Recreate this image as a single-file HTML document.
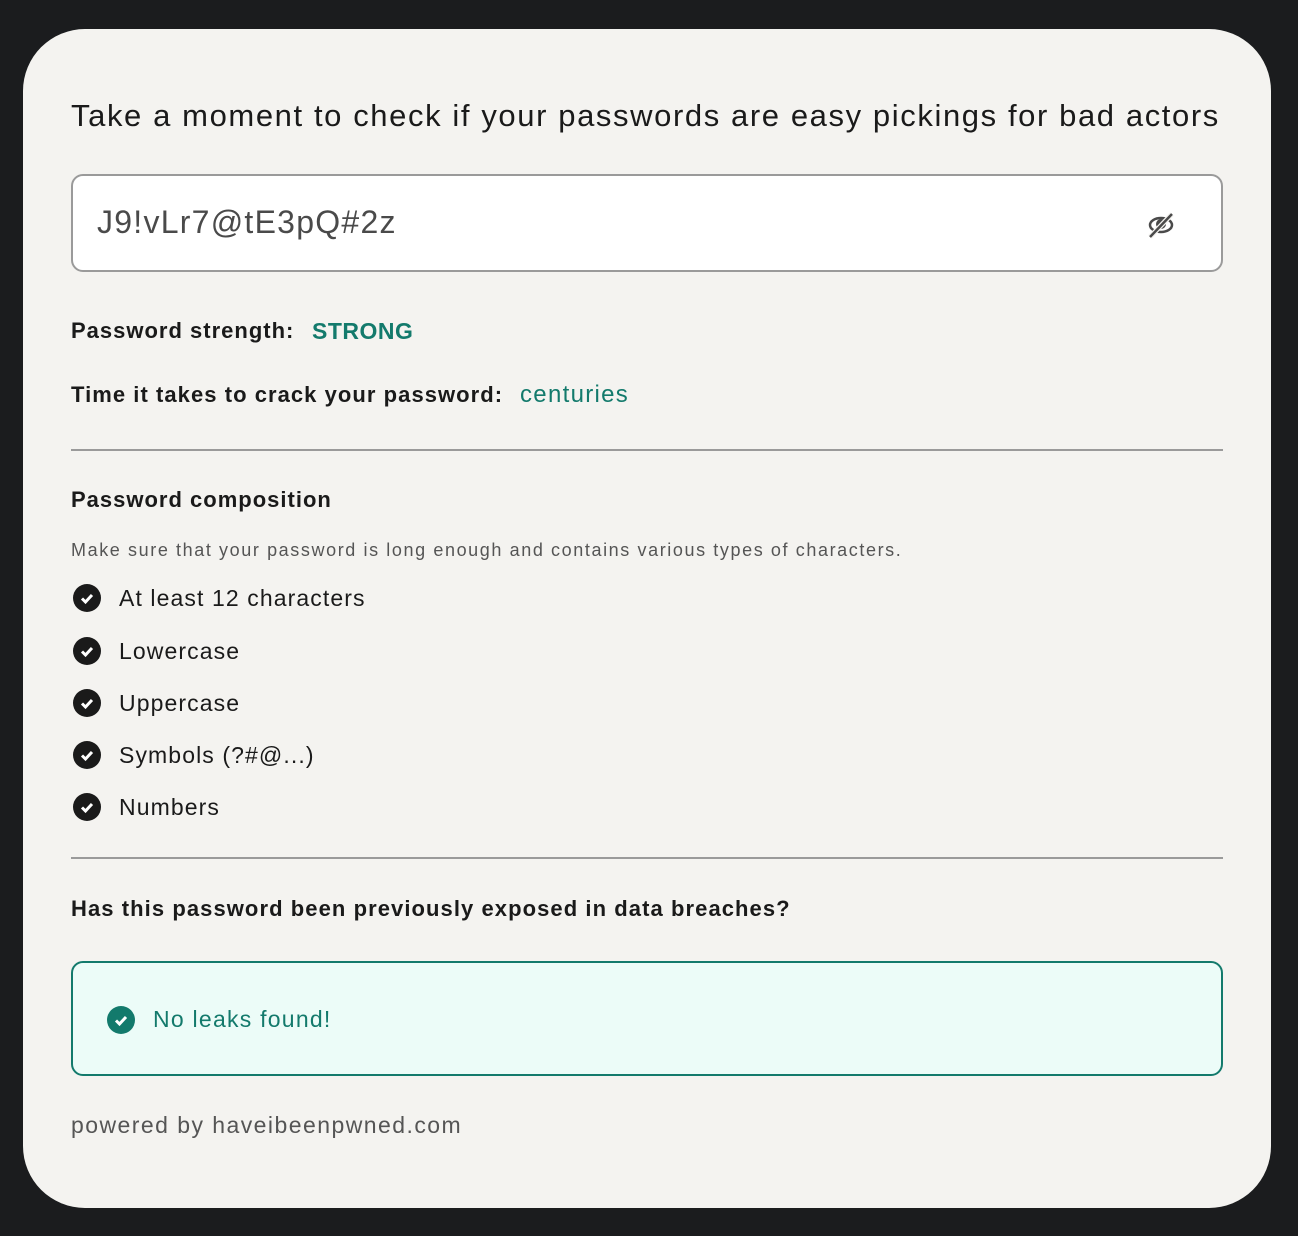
<!DOCTYPE html>
<html><head><style>
body{margin:0;width:1298px;height:1236px;background:#1b1c1e;font-family:"Liberation Sans",sans-serif;position:relative;overflow:hidden}
.card{position:absolute;left:23px;top:29px;width:1248px;height:1179px;background:#f4f3f0;border-radius:62px}
.a{position:absolute;white-space:nowrap;line-height:1}
.b{font-weight:bold;color:#1a1a1a;font-size:22px;letter-spacing:1px}
.g{color:#137a6c}
.hr{position:absolute;left:71px;width:1152px;height:2px;background:#9a9a9a}
.ic{position:absolute;left:73px;width:28px;height:28px;border-radius:50%;background:#1a1a1a}
.ic svg{position:absolute;left:0;top:0}
.it{position:absolute;left:119px;font-size:23px;color:#1a1a1a;line-height:1;letter-spacing:1.1px}
</style></head><body>
<div class="card"></div>
<div class="a" style="left:71px;top:100px;font-size:31px;color:#1a1a1a;letter-spacing:1.6px">Take a moment to check if your passwords are easy pickings for bad actors</div>
<div style="position:absolute;left:71px;top:174px;width:1148px;height:94px;border:2px solid #9a9a9a;border-radius:12px;background:#fff"></div>
<div class="a" style="left:97px;top:206px;font-size:32px;color:#4a4a4a;letter-spacing:1.25px">J9!vLr7@tE3pQ#2z</div>
<svg style="position:absolute;left:1146px;top:211px" width="30" height="28" viewBox="0 0 30 28"><ellipse cx="15" cy="14" rx="11" ry="7" fill="none" stroke="#4a4a4a" stroke-width="2.5"/><circle cx="15" cy="13" r="5" fill="#4a4a4a"/><line x1="4" y1="26" x2="26" y2="3" stroke="#f4f3f0" stroke-width="5"/><line x1="4" y1="26" x2="26" y2="3" stroke="#4a4a4a" stroke-width="2.5"/></svg>
<div class="a b" style="left:71px;top:320px">Password strength:</div>
<div class="a b g" style="left:312px;top:320px;font-size:23px;letter-spacing:0.5px">STRONG</div>
<div class="a b" style="left:71px;top:384px;letter-spacing:1.05px">Time it takes to crack your password:</div>
<div class="a g" style="left:520px;top:383px;font-size:24px;letter-spacing:1.3px">centuries</div>
<div class="hr" style="top:449px"></div>
<div class="a b" style="left:71px;top:489px">Password composition</div>
<div class="a" style="left:71px;top:541px;font-size:18px;color:#555;letter-spacing:1.6px">Make sure that your password is long enough and contains various types of characters.</div>
<div class="ic" style="top:584px"><svg width="28" height="28"><path d="M9 14.5l3.5 3.5 6.5-7" fill="none" stroke="#fff" stroke-width="3"/></svg></div><div class="it" style="top:587px">At least 12 characters</div>
<div class="ic" style="top:637px"><svg width="28" height="28"><path d="M9 14.5l3.5 3.5 6.5-7" fill="none" stroke="#fff" stroke-width="3"/></svg></div><div class="it" style="top:640px">Lowercase</div>
<div class="ic" style="top:689px"><svg width="28" height="28"><path d="M9 14.5l3.5 3.5 6.5-7" fill="none" stroke="#fff" stroke-width="3"/></svg></div><div class="it" style="top:692px">Uppercase</div>
<div class="ic" style="top:741px"><svg width="28" height="28"><path d="M9 14.5l3.5 3.5 6.5-7" fill="none" stroke="#fff" stroke-width="3"/></svg></div><div class="it" style="top:744px">Symbols (?#@...)</div>
<div class="ic" style="top:793px"><svg width="28" height="28"><path d="M9 14.5l3.5 3.5 6.5-7" fill="none" stroke="#fff" stroke-width="3"/></svg></div><div class="it" style="top:796px">Numbers</div>
<div class="hr" style="top:857px"></div>
<div class="a b" style="left:71px;top:898px;letter-spacing:1.07px">Has this password been previously exposed in data breaches?</div>
<div style="position:absolute;left:71px;top:961px;width:1148px;height:111px;border:2px solid #137a6c;border-radius:12px;background:#ecfcf8"></div>
<div class="ic" style="left:107px;top:1006px;background:#137a6c"><svg width="28" height="28"><path d="M9 14.5l3.5 3.5 6.5-7" fill="none" stroke="#fff" stroke-width="3"/></svg></div>
<div class="a g" style="left:153px;top:1008px;font-size:23px;letter-spacing:1.25px">No leaks found!</div>
<div class="a" style="left:71px;top:1114px;font-size:23px;color:#555;letter-spacing:1.45px">powered by haveibeenpwned.com</div>
</body></html>
